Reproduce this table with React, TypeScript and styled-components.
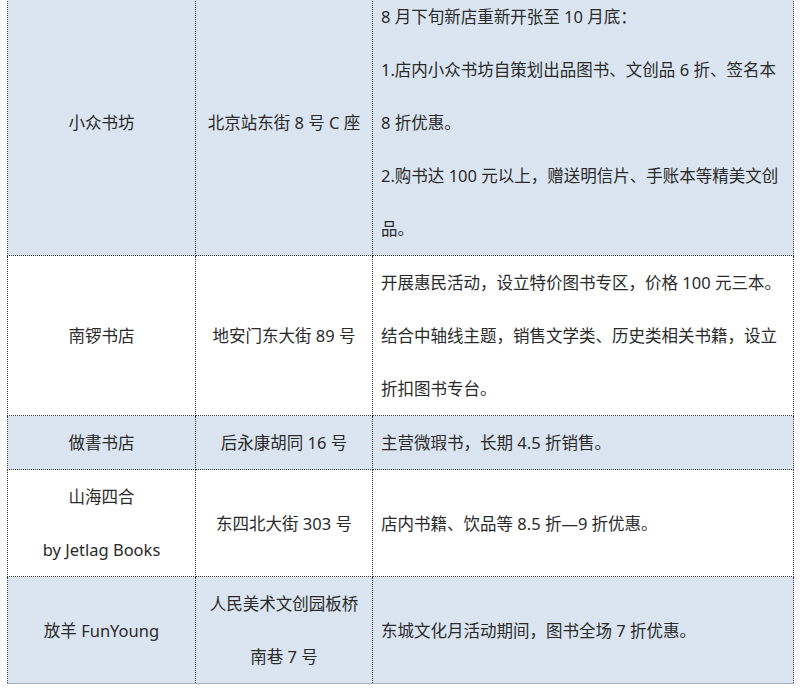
import React from "react";
import styled, { createGlobalStyle } from "styled-components";

const Global = createGlobalStyle`
  html, body { margin: 0; padding: 0; background: #ffffff; }
  body { font-family: "Noto Sans", "Noto Sans CJK SC", sans-serif; color: #2a2a2a; overflow: hidden; }
`;

const Page = styled.div`
  padding-left: 7px;
  margin-top: -11px;
  width: 800px;
  height: 703px;
  box-sizing: border-box;
`;

const Table = styled.table`
  border-collapse: collapse;
  table-layout: fixed;
  width: 786px;
  font-size: 16.5px;
  line-height: 53px;
`;

const Row = styled.tr<{ $shaded?: boolean; $last?: boolean }>`
  background: ${(p) => (p.$shaded ? "#dbe5f1" : "#ffffff")};
  & > td {
    border-bottom: ${(p) => (p.$last ? "1px solid #a3b2c6" : "1px dotted #3a3a3a")};
  }
`;

const Cell = styled.td<{ $wide?: boolean }>`
  border-left: 1px dotted #3a3a3a;
  border-right: 1px dotted #3a3a3a;
  border-top: 1px dotted #3a3a3a;
  padding: ${(p) => (p.$wide ? "0 6px 0 8px" : "0")};
  text-align: ${(p) => (p.$wide ? "left" : "center")};
  vertical-align: middle;
  white-space: nowrap;
`;

const Line = styled.div`
  height: 53px;
`;

type Store = { name: string[]; addr: string[]; desc: string[] };

const stores: Store[] = [
  {
    name: ["小众书坊"],
    addr: ["北京站东街 8 号 C 座"],
    desc: [
      "8 月下旬新店重新开张至 10 月底：",
      "1.店内小众书坊自策划出品图书、文创品 6 折、签名本",
      "8 折优惠。",
      "2.购书达 100 元以上，赠送明信片、手账本等精美文创",
      "品。",
    ],
  },
  {
    name: ["南锣书店"],
    addr: ["地安门东大街 89 号"],
    desc: [
      "开展惠民活动，设立特价图书专区，价格 100 元三本。",
      "结合中轴线主题，销售文学类、历史类相关书籍，设立",
      "折扣图书专台。",
    ],
  },
  {
    name: ["做書书店"],
    addr: ["后永康胡同 16 号"],
    desc: ["主营微瑕书，长期 4.5 折销售。"],
  },
  {
    name: ["山海四合", "by Jetlag Books"],
    addr: ["东四北大街 303 号"],
    desc: ["店内书籍、饮品等 8.5 折—9 折优惠。"],
  },
  {
    name: ["放羊 FunYoung"],
    addr: ["人民美术文创园板桥", "南巷 7 号"],
    desc: ["东城文化月活动期间，图书全场 7 折优惠。"],
  },
];

const Lines = ({ items }: { items: string[] }) => (
  <>
    {items.map((t, i) => (
      <Line key={i}>{t}</Line>
    ))}
  </>
);

export default function App() {
  return (
    <Page>
      <Global />
      <Table>
        <colgroup>
          <col style={{ width: 188 }} />
          <col style={{ width: 177 }} />
          <col style={{ width: 421 }} />
        </colgroup>
        <tbody>
          {stores.map((s, i) => (
            <Row key={i} $shaded={i % 2 === 0} $last={i === stores.length - 1}>
              <Cell>
                <Lines items={s.name} />
              </Cell>
              <Cell>
                <Lines items={s.addr} />
              </Cell>
              <Cell $wide>
                <Lines items={s.desc} />
              </Cell>
            </Row>
          ))}
        </tbody>
      </Table>
    </Page>
  );
}
